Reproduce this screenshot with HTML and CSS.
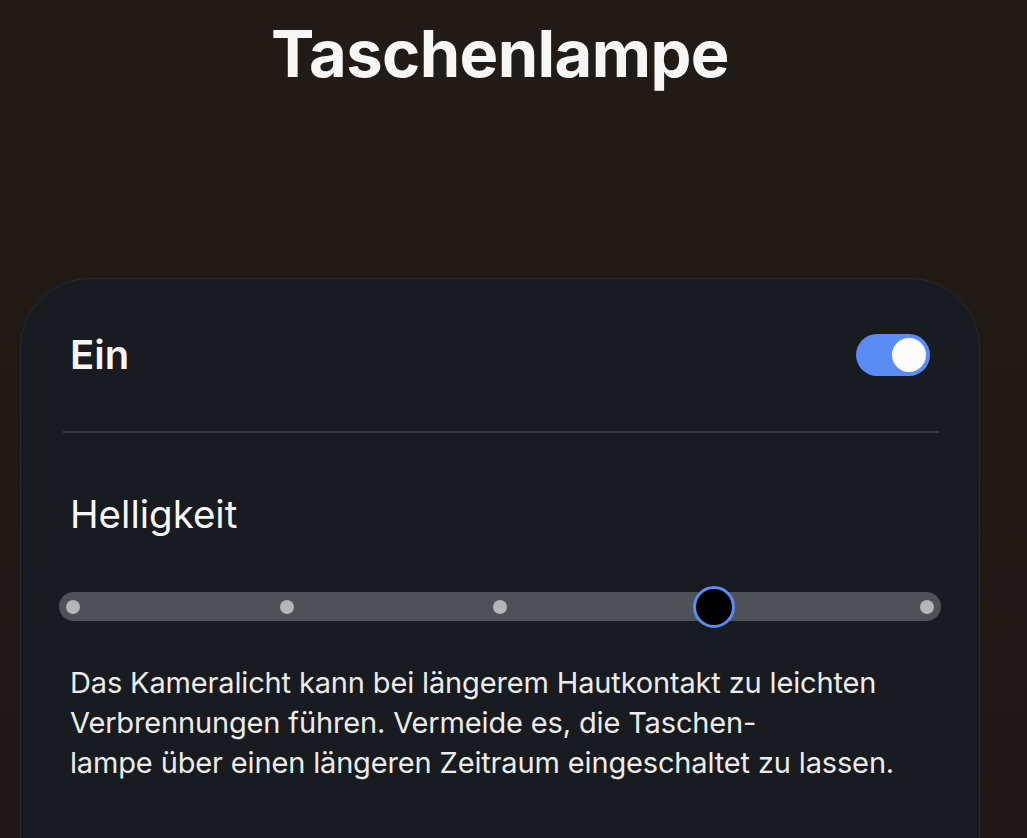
FILE: index.html
```html
<!DOCTYPE html>
<html lang="de">
<head>
    <meta charset="UTF-8">
    <meta name="viewport" content="width=device-width, initial-scale=1.0">
    <title>Taschenlampe</title>
    <link rel="stylesheet" href="styles.css">
</head>
<body>

<h1 class="title">Taschenlampe</h1>

<div class="card">
    <!-- On / off switch -->
    <div class="row">
        <span class="row-label">Ein</span>
        <div class="switch is-on">
            <div class="switch-knob"></div>
        </div>
    </div>

    <div class="divider"></div>

    <!-- Brightness -->
    <div class="section-label">Helligkeit</div>
    <div class="slider">
        <div class="stop"><span class="dot"></span></div>
        <div class="stop"><span class="dot"></span></div>
        <div class="stop"><span class="dot"></span></div>
        <div class="stop"><span class="thumb"></span></div>
        <div class="stop"><span class="dot"></span></div>
    </div>

    <p class="hint">Das Kameralicht kann bei längerem Hautkontakt zu leichten<br>
    Verbrennungen führen. Vermeide es, die Taschen-<br>
    lampe über einen längeren Zeitraum eingeschaltet zu lassen.</p>
</div>

</body>
</html>
```

FILE: styles.css
```css
html, body {
    height: 100%;
}
body {
    margin: 0;
    font-family: Inter, "Noto Sans", sans-serif;
    color: #f6f6f6;
    background: linear-gradient(180deg, #221c19 0%, #201a17 60%, #1d1815 100%);
    overflow: hidden;
}
.title {
    margin: 0 47px 0 20px;
    padding-top: 14px;
    height: 278px;
    box-sizing: border-box;
    text-align: center;
    font-size: 65px;
    font-weight: 700;
    letter-spacing: -0.6px;
    line-height: 80px;
}
.card {
    margin: 0 47px 0 20px;
    padding: 55px 38px 200px;
    min-height: 700px;
    background-color: #181b1f;
    border: 1px solid #262b30;
    border-radius: 70px;
}
.row {
    display: flex;
    align-items: center;
    justify-content: space-between;
    padding: 0 11px;
    height: 42px;
}
.row-label {
    font-size: 40px;
    font-weight: 600;
    line-height: 42px;
}
.switch {
    width: 74px;
    height: 42px;
    border-radius: 21px;
    background-color: #5a8cf4;
    display: flex;
    align-items: center;
    justify-content: flex-end;
    padding: 0 4px;
    box-sizing: border-box;
}
.switch-knob {
    width: 34px;
    height: 34px;
    border-radius: 50%;
    background-color: #fcfcfd;
}
.divider {
    height: 2px;
    margin: 55px 2px 0 4px;
    background-color: #373c41;
}
.section-label {
    margin-top: 57px;
    padding-left: 11px;
    font-size: 38.5px;
    font-weight: 400;
    line-height: 48px;
}
.slider {
    margin-top: 54px;
    height: 29px;
    border-radius: 15px;
    background-color: #4e5256;
    display: flex;
    align-items: center;
    justify-content: space-between;
    padding: 0 14px;
}
.stop {
    width: 0;
    display: flex;
    justify-content: center;
    align-items: center;
}
.dot {
    flex: none;
    width: 14px;
    height: 14px;
    border-radius: 50%;
    background-color: #b4b6b9;
}
.thumb {
    flex: none;
    width: 42px;
    height: 42px;
    box-sizing: border-box;
    border-radius: 50%;
    background-color: #000;
    border: 3px solid #5a8cf4;
}
.hint {
    margin: 42px 0 0;
    padding-left: 11px;
    font-size: 29px;
    letter-spacing: -0.15px;
    line-height: 40px;
    color: #ececec;
}
```
